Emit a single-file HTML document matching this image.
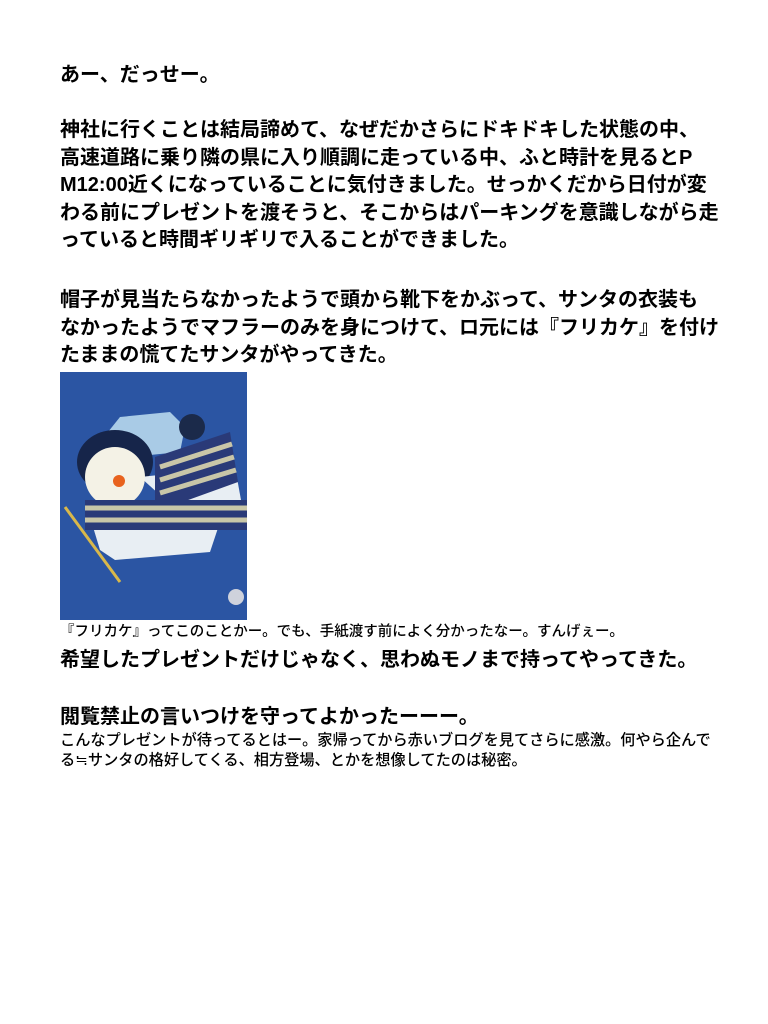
<!DOCTYPE html>
<html><head><meta charset="utf-8"><style>
body{margin:0;background:#fff;width:768px;height:1024px;overflow:hidden;font-family:"Liberation Sans","Noto Sans CJK JP",sans-serif;font-weight:bold;color:#000}
.l{position:absolute;left:60px;white-space:nowrap;font-size:20px;line-height:28px}
.s{position:absolute;left:60px;white-space:nowrap;font-size:14.5px;line-height:20px;font-weight:500}
</style></head><body>
<div class="l" style="top:61px">あー、だっせー。</div>
<div class="l" style="top:116px">神社に行くことは結局諦めて、なぜだかさらにドキドキした状態の中、</div>
<div class="l" style="top:143.5px">高速道路に乗り隣の県に入り順調に走っている中、ふと時計を見るとP</div>
<div class="l" style="top:171px">M12:00近くになっていることに気付きました。せっかくだから日付が変</div>
<div class="l" style="top:198.5px">わる前にプレゼントを渡そうと、そこからはパーキングを意識しながら走</div>
<div class="l" style="top:226px">っていると時間ギリギリで入ることができました。</div>
<div class="l" style="top:286px">帽子が見当たらなかったようで頭から靴下をかぶって、サンタの衣装も</div>
<div class="l" style="top:313.5px">なかったようでマフラーのみを身につけて、ロ元には『フリカケ』を付け</div>
<div class="l" style="top:341px">たままの慌てたサンタがやってきた。</div>
<svg style="position:absolute;left:60px;top:372px" width="187" height="248" viewBox="0 0 187 248">
<rect width="187" height="248" fill="#2b55a3"/>
<path d="M40 70 L60 45 L110 40 L125 55 L120 80 L70 85Z" fill="#a9cbe6"/>
<circle cx="132" cy="55" r="13" fill="#1b2a4a"/>
<ellipse cx="55" cy="90" rx="38" ry="32" fill="#16254a"/>
<path d="M80 105 L175 95 L185 150 L130 150 Z" fill="#e8eef3"/>
<path d="M30 145 L160 150 L150 180 L55 188 L40 178 Z" fill="#e8eef3"/>
<path d="M95 85 L170 60 L178 110 L95 140 Z" fill="#2a3a78"/>
<path d="M100 95 L172 72 M100 108 L174 85 M100 121 L176 98" stroke="#c9c6a8" stroke-width="5"/>
<circle cx="55" cy="105" r="30" fill="#f4f2e6"/>
<circle cx="59" cy="109" r="6" fill="#e8631e"/>
<rect x="25" y="128" width="162" height="30" fill="#2a3a78"/>
<path d="M25 136 H187 M25 148 H187" stroke="#c9c6a8" stroke-width="5"/>
<path d="M5 135 L60 210" stroke="#d9b84a" stroke-width="3"/>
<circle cx="176" cy="225" r="8" fill="#cfd2dc"/>
</svg>
<div class="s" style="top:622px">『フリカケ』ってこのことかー。でも、手紙渡す前によく分かったなー。すんげぇー。</div>
<div class="l" style="top:646px">希望したプレゼントだけじゃなく、思わぬモノまで持ってやってきた。</div>
<div class="l" style="top:703px">閲覧禁止の言いつけを守ってよかったーーー。</div>
<div class="s" style="top:731px;font-size:15.2px">こんなプレゼントが待ってるとはー。家帰ってから赤いブログを見てさらに感激。何やら企んで</div>
<div class="s" style="top:751px;font-size:15.2px">る≒サンタの格好してくる、相方登場、とかを想像してたのは秘密。</div>
</body></html>
